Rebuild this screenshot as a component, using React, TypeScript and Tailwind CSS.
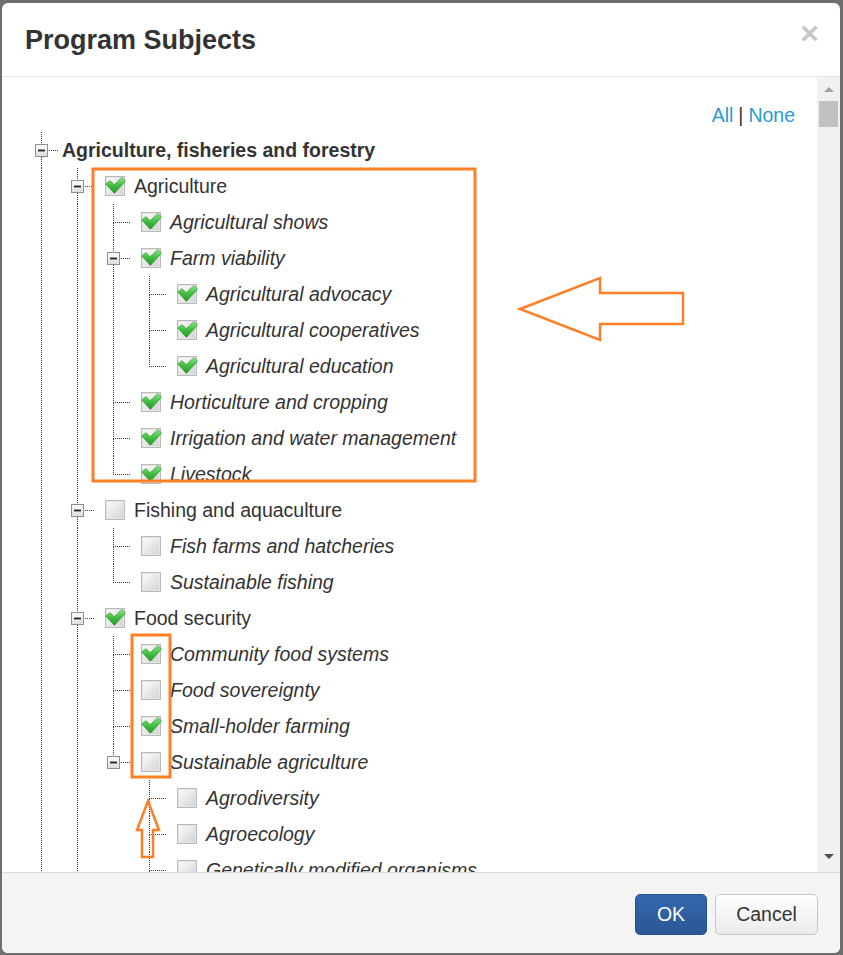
import React from "react";

type Node = {
  label: string;
  checked?: boolean;
  expander?: boolean;
  children?: Node[];
  hasNextOverride?: boolean;
};

const tree: Node = {
  label: "Agriculture, fisheries and forestry",
  expander: true,
  hasNextOverride: true,
  children: [
    {
      label: "Agriculture",
      checked: true,
      expander: true,
      children: [
        { label: "Agricultural shows", checked: true },
        {
          label: "Farm viability",
          checked: true,
          expander: true,
          children: [
            { label: "Agricultural advocacy", checked: true },
            { label: "Agricultural cooperatives", checked: true },
            { label: "Agricultural education", checked: true },
          ],
        },
        { label: "Horticulture and cropping", checked: true },
        { label: "Irrigation and water management", checked: true },
        { label: "Livestock", checked: true },
      ],
    },
    {
      label: "Fishing and aquaculture",
      expander: true,
      children: [
        { label: "Fish farms and hatcheries" },
        { label: "Sustainable fishing" },
      ],
    },
    {
      label: "Food security",
      checked: true,
      expander: true,
      hasNextOverride: true,
      children: [
        { label: "Community food systems", checked: true },
        { label: "Food sovereignty" },
        { label: "Small-holder farming", checked: true },
        {
          label: "Sustainable agriculture",
          expander: true,
          children: [
            { label: "Agrodiversity" },
            { label: "Agroecology" },
            { label: "Genetically modified organisms", hasNextOverride: true },
          ],
        },
      ],
    },
  ],
};

type Row = {
  node: Node;
  depth: number;
  guides: boolean[];
  hasNext: boolean;
};

function flatten(node: Node, depth: number, guides: boolean[], hasNext: boolean, out: Row[]) {
  out.push({ node, depth, guides, hasNext });
  const kids = node.children || [];
  kids.forEach((k, i) => {
    const next = k.hasNextOverride ?? i < kids.length - 1;
    flatten(k, depth + 1, [...guides, hasNext], next, out);
  });
}

const rows: Row[] = [];
flatten(tree, 0, [], true, rows);

function CheckBox({ checked }: { checked: boolean }) {
  return (
    <svg width="20" height="20" viewBox="0 0 20 20" className="shrink-0 overflow-visible">
      <defs>
        <linearGradient id="bxg" x1="0" y1="0" x2="1" y2="1">
          <stop offset="0" stopColor="#fbfbfb" />
          <stop offset="1" stopColor="#d4d4d4" />
        </linearGradient>
        <linearGradient id="ckg" x1="0" y1="0" x2="0" y2="1">
          <stop offset="0" stopColor="#8ae68a" />
          <stop offset="0.5" stopColor="#43be43" />
          <stop offset="1" stopColor="#289428" />
        </linearGradient>
      </defs>
      <rect x="0.5" y="0.5" width="19" height="19" fill="#e6e6e6" stroke="#b9b9b9" />
      <rect x="2" y="2" width="16" height="16" fill="url(#bxg)" />
      {checked && (
        <path
          d="M0.6 8 L5 4.6 L9.2 8.6 L17 1.4 L20.6 5.2 L9.4 17.4 Z"
          fill="url(#ckg)"
          stroke="#2f9a2f"
          strokeWidth="0.6"
        />
      )}
    </svg>
  );
}

function Expander() {
  return (
    <svg width="13" height="13" viewBox="0 0 13 13" className="absolute left-[12px] top-[12px]">
      <defs>
        <linearGradient id="exg" x1="0" y1="0" x2="0" y2="1">
          <stop offset="0" stopColor="#ffffff" />
          <stop offset="1" stopColor="#dcdcdc" />
        </linearGradient>
      </defs>
      <rect x="0.5" y="0.5" width="12" height="12" fill="url(#exg)" stroke="#8f8f8f" />
      <rect x="3" y="5.6" width="7" height="1.8" fill="#222" />
    </svg>
  );
}

const vline =
  "ml-[18px] w-[1px] bg-[repeating-linear-gradient(to_bottom,#3a3a3a_0px,#3a3a3a_1px,transparent_1px,transparent_2px)]";
const hline =
  "ml-[18px] h-[1px] w-[18px] bg-[repeating-linear-gradient(to_right,#3a3a3a_0px,#3a3a3a_1px,transparent_1px,transparent_2px)]";

function TreeRow({ row }: { row: Row }) {
  const { node, depth, guides, hasNext } = row;
  return (
    <div className="flex h-[36px] shrink-0">
      {guides.map((g, i) => (
        <div key={i} className="flex w-[36px] shrink-0">
          {g && <div className={`${vline} h-full`} />}
        </div>
      ))}
      <div className="relative flex w-[36px] shrink-0 flex-col">
        <div className={`${vline} h-[18px]`} />
        <div className={hline} />
        {hasNext && <div className={`${vline} h-[17px]`} />}
        {node.expander && <Expander />}
      </div>
      {depth === 0 ? (
        <div className="ml-[3px] flex items-center pt-[2px] text-[19.5px] font-bold text-[#333]">{node.label}</div>
      ) : (
        <div className="ml-[10px] flex items-center">
          <CheckBox checked={!!node.checked} />
          <span
            className={`ml-[9px] whitespace-nowrap pt-[2px] text-[19.5px] text-[#333] ${depth >= 2 ? "italic" : ""}`}
          >
            {node.label}
          </span>
        </div>
      )}
    </div>
  );
}

export default function App() {
  return (
    <div
      className="relative h-[955px] w-[843px] overflow-hidden bg-[#6f6f6f] pl-[2px] pt-[3px]"
      style={{ fontFamily: '"Liberation Sans", Arial, sans-serif' }}
    >
      <div className="flex h-[950px] w-[838px] flex-col overflow-hidden rounded-[6px] bg-white">
        {/* header */}
        <div className="flex h-[74px] shrink-0 items-center justify-between border-b border-[#e5e5e5] pl-[23px] pr-[21px]">
          <h1 className="pt-[2px] text-[27px] font-bold text-[#333]">Program Subjects</h1>
          <span className="pb-[14px] text-[32px] font-bold leading-none text-[#c6c6c6]">×</span>
        </div>
        {/* body */}
        <div className="flex h-[795px] shrink-0">
          <div className="flex min-w-0 flex-1 flex-col overflow-hidden pl-[21px] pt-[22px]">
            <div className="flex h-[33px] shrink-0 items-center justify-end pr-[22px] text-[19.5px]">
              <span className="text-[#2a9bcf]">All</span>
              <span className="mx-[5px] text-[#333]">|</span>
              <span className="text-[#2a9bcf]">None</span>
            </div>
            {rows.map((r, i) => (
              <TreeRow key={i} row={r} />
            ))}
          </div>
          {/* scrollbar */}
          <div className="flex w-[23px] shrink-0 flex-col bg-[#f1f1f1]">
            <div className="flex h-[24px] shrink-0 items-center justify-center">
              <div className="h-0 w-0 border-x-[5px] border-b-[5px] border-x-transparent border-b-[#a3a3a3]" />
            </div>
            <div className="mx-[2px] h-[26px] shrink-0 bg-[#c1c1c1]" />
            <div className="flex-1" />
            <div className="flex h-[28px] shrink-0 items-center justify-center pb-[3px]">
              <div className="h-0 w-0 border-x-[5px] border-t-[5px] border-x-transparent border-t-[#505050]" />
            </div>
          </div>
        </div>
        {/* footer */}
        <div className="flex flex-1 justify-end gap-[8px] border-t border-[#dcdcdc] bg-[#f4f4f4] pr-[22px] pt-[21px]">
          <button className="h-[41px] w-[72px] rounded-[5px] border border-[#27508a] bg-gradient-to-b from-[#3468ad] to-[#2a5796] text-[19.5px] text-white">
            OK
          </button>
          <button className="h-[41px] w-[103px] rounded-[5px] border border-[#c6c6c6] bg-gradient-to-b from-white to-[#ebebeb] text-[19.5px] text-[#333]">
            Cancel
          </button>
        </div>
      </div>

      {/* annotations overlay */}
      <svg className="pointer-events-none absolute left-0 top-0" width="843" height="955" viewBox="0 0 843 955">
        <rect x="93" y="169" width="382" height="312" fill="none" stroke="#ff7f27" strokeWidth="3" />
        <path
          d="M520 309 L600 278 L600 293 L683 293 L683 324 L600 324 L600 340 Z"
          fill="none"
          stroke="#ff7f27"
          strokeWidth="2.5"
          strokeLinejoin="miter"
        />
        <rect x="132" y="635" width="38" height="142" fill="none" stroke="#ff7f27" strokeWidth="3" />
        <path
          d="M148 801 L159 830 L153 830 L153 857 L142 857 L142 830 L137 830 Z"
          fill="none"
          stroke="#ff7f27"
          strokeWidth="2.5"
        />
      </svg>
    </div>
  );
}
